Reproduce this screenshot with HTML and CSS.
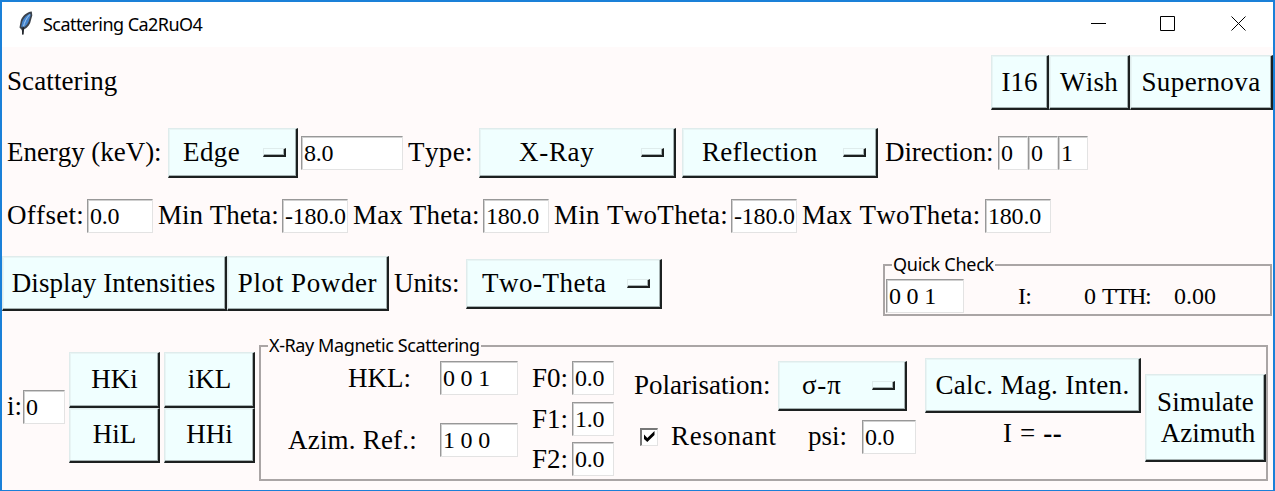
FILE: index.html
```html
<!DOCTYPE html>
<html lang="en">
<head>
<meta charset="utf-8">
<title>Scattering Ca2RuO4</title>
<link rel="stylesheet" href="styles.css">
</head>
<body>
<div class="window">
  <header class="titlebar">
    <svg class="feather" width="16" height="24" viewBox="0 0 16 24">
      <path d="M13.800 .5C8.500 1 4.500 5 2.800 9.500L1.500 16.500L3.800 19L4.400 23.500H5.400L6 18.500C10 16.500 12.300 13 13 9L14.300 4.500Z" fill="#3b424b"/>
      <path d="M12 2.500C8.500 4 5.500 7 4.300 10.500L3.200 15.500L5 17C8.500 15 10.500 12 11.300 8.500L12.600 4.500Z" fill="#4484cc"/>
      <path d="M11.800 3.500C8.500 7 6.500 11 5.300 16" stroke="#a9cdf0" stroke-width="1" fill="none"/>
      <path d="M5.200 15.500L4.800 23.500" stroke="#15181c" stroke-width="1.200" fill="none"/>
    </svg>
    <span class="title">Scattering Ca2RuO4</span>
    <svg class="controls" width="156" height="16" viewBox="0 0 156 16" fill="none" stroke="#000" stroke-width="1">
      <path d="M0 7.500H15M69.500 .5H83.500V14.500H69.500ZM140.500 .5L154.500 14.500M154.500 .5L140.500 14.500"/>
    </svg>
  </header>

  <section class="row row-head">
    <span class="label t-head">Scattering</span>
    <div class="presets">
      <button class="btn"><span class="t-i16">I16</span></button>
      <button class="btn"><span class="t-wish">Wish</span></button>
      <button class="btn"><span class="t-super">Supernova</span></button>
    </div>
  </section>

  <section class="row row-energy">
    <span class="label t-energy">Energy (keV):</span>
    <button class="menu"><span class="t-edge">Edge</span><i class="bar"></i></button>
    <span></span>
    <div class="entry">8.0</div>
    <span class="label t-type">Type:</span>
    <button class="menu"><span class="t-xray">X-Ray</span><i class="bar"></i></button>
    <span></span>
    <button class="menu"><span class="t-refl">Reflection</span><i class="bar"></i></button>
    <span class="label t-dir">Direction:</span>
    <div class="entry">0</div>
    <div class="entry">0</div>
    <div class="entry">1</div>
  </section>

  <section class="row row-range">
    <span class="label t-offset">Offset:</span>
    <div class="entry">0.0</div>
    <span class="label t-mint">Min Theta:</span>
    <div class="entry">-180.0</div>
    <span class="label t-maxt">Max Theta:</span>
    <div class="entry">180.0</div>
    <span class="label t-two-theta">Min TwoTheta:</span>
    <div class="entry">-180.0</div>
    <span class="label t-two-theta">Max TwoTheta:</span>
    <div class="entry">180.0</div>
  </section>

  <section class="row row-display">
    <button class="btn"><span class="t-disp">Display Intensities</span></button>
    <button class="btn"><span class="t-plot">Plot Powder</span></button>
    <span class="label t-units">Units:</span>
    <button class="menu"><span class="t-two">Two-Theta</span><i class="bar"></i></button>
    <span></span>
    <div class="group quick">
      <span class="legend lg-quick">Quick Check</span>
      <div class="entry">0 0 1</div>
      <span class="small t-int">I:</span>
      <span class="small t-zero">0</span>
      <span class="small t-tth">TTH:</span>
      <span class="small">0.00</span>
    </div>
  </section>

  <section class="row row-bottom">
    <span class="label t-i">i:</span>
    <div class="entry index">0</div>
    <div class="planes">
      <button class="btn"><span class="t-plane">HKi</span></button>
      <button class="btn"><span class="t-plane">iKL</span></button>
      <button class="btn"><span class="t-plane">HiL</span></button>
      <button class="btn"><span class="t-plane">HHi</span></button>
    </div>
    <div class="group magnetic">
      <span class="legend lg-mag">X-Ray Magnetic Scattering</span>
      <div class="refs">
        <span class="label t-hkl">HKL:</span><div class="entry">0 0 1</div>
        <span class="label t-azim">Azim. Ref.:</span><div class="entry">1 0 0</div>
      </div>
      <div class="factors">
        <span class="label">F0:</span><div class="entry">0.0</div>
        <span class="label">F1:</span><div class="entry">1.0</div>
        <span class="label">F2:</span><div class="entry">0.0</div>
      </div>
      <div class="polar">
        <div class="polar-top">
          <span class="label t-pol">Polarisation:</span>
          <button class="menu"><span class="t-sp">σ-π</span><i class="bar"></i></button>
        </div>
        <div class="polar-low">
          <span class="check"><svg width="14" height="14" viewBox="0 0 14 14"><path d="M2 4.500V9L5.300 12L12.500 5V1L5.300 8Z" fill="#000"/></svg></span>
          <span class="label t-res">Resonant</span>
          <span class="label t-psi">psi:</span>
          <div class="entry">0.0</div>
        </div>
      </div>
      <div class="calc">
        <button class="btn"><span class="t-calc">Calc. Mag. Inten.</span></button>
        <span class="label t-result">I = <b>--</b></span>
      </div>
      <button class="btn simulate"><span class="t-sim">Simulate</span><span class="t-azm">Azimuth</span></button>
    </div>
  </section>
</div>
</body>
</html>
```
FILE: styles.css
```css
* { box-sizing: border-box; }
body { margin: 0; }

.window {
  width: 1275px;
  height: 491px;
  border: 2px solid #1a80d8;
  border-bottom-width: 1px;
  background: #fffafa;
  color: #000;
  font: 27px/31px "Liberation Serif", serif;
  font-kerning: none;
  font-variant-ligatures: none;
  overflow: hidden;
}

.titlebar {
  display: flex;
  height: 45px;
  background: #fff;
  font: 18px/24px "Noto Sans", sans-serif;
}
.feather { margin: 9px 0 0 16px; }
.title { margin: 10px 0 0 9px; letter-spacing: -.55px; white-space: nowrap; }
.controls { margin: 14px 26px 0 auto; }

.row { display: grid; align-items: center; }
.label, .btn, .menu, .entry, .small { white-space: pre; }
.label { padding: 0 0 2px 5px; }

.btn, .menu {
  margin: 0;
  padding: 0;
  font: inherit;
  color: inherit;
  background: #f0ffff;
  border: 1px solid #dfecec;
  border-right: 2px solid #1c2020;
  border-bottom: 2px solid #1c2020;
  box-shadow: inset -1px -1px #a5b2b2, inset 1px 1px #e8f5f5;
  display: flex;
  align-items: center;
  justify-content: center;
}
.btn { height: 55px; }
.menu { height: 50px; justify-content: space-between; padding: 0 10px 0 13px; }
.bar {
  width: 23px;
  height: 9px;
  border: 1px solid #dfecec;
  border-right: 2px solid #1c2020;
  border-bottom: 2px solid #1c2020;
  box-shadow: inset -1px -1px #a5b2b2;
}
.entry {
  height: 34px;
  padding-left: 2px;
  background: #fff;
  border: 1px solid #e3e3e3;
  border-top-color: #989898;
  border-left-color: #989898;
  box-shadow: inset 1px 1px #d0d0d0;
  font-size: 24px;
  line-height: 33px;
  letter-spacing: -.2px;
  overflow: hidden;
}
.small { font-size: 24px; }

.row-head { display: flex; justify-content: space-between; margin-top: 8px; }
.presets { display: grid; grid-template-columns: 58px 81px 143px; }
.t-head { letter-spacing: .1px; }
.t-wish { letter-spacing: .2px; }
.t-super { letter-spacing: .4px; }

.row-energy {
  margin-top: 18px;
  grid-template-columns: 166px 130px 3px 102px 76px 197px 6px 196px 120px 30px 30px 30px;
}
.t-energy { letter-spacing: -.05px; }
.t-edge { padding-left: 1px; letter-spacing: .4px; }
.t-type { letter-spacing: .4px; }
.t-xray { padding-left: 26px; letter-spacing: .7px; }
.t-refl { padding-left: 6px; letter-spacing: .3px; }
.t-dir { padding-left: 7px; letter-spacing: -.1px; }

.row-range {
  margin-top: 21px;
  grid-template-columns: 85px 66px 129px 66px 135px 66px 182px 66px 188px 66px;
}
.t-offset { letter-spacing: .3px; }
.t-maxt { letter-spacing: .15px; }
.t-two-theta { letter-spacing: .3px; }

.row-display {
  margin-top: 23px;
  align-items: start;
  grid-template-columns: 225px 162px 77px 196px 221px 389px;
}
.t-disp { letter-spacing: .1px; padding-right: 1px; }
.t-plot { letter-spacing: .6px; }
.t-units { margin-top: 12px; letter-spacing: -.1px; }
.t-two { padding-left: 2px; letter-spacing: .5px; }
.row-display > .menu { margin-top: 3px; }

.group {
  position: relative;
  border: 2px solid #aaa5a5;
}
.legend {
  position: absolute;
  font: 18px/22px "Noto Sans", sans-serif;
  background: #fffafa;
  white-space: nowrap;
}
.quick {
  margin-top: 8px;
  height: 52px;
  padding: 12px 0 0 1px;
  display: grid;
  align-items: center;
  grid-template-columns: 78px 78px 54px 78px 60px;
}
.quick .small { line-height: 34px; margin-top: -1px; }
.t-int { padding-left: 54px; letter-spacing: -.8px; }
.t-zero { text-align: right; }
.t-tth { padding-left: 6px; letter-spacing: -1.200px; }
.lg-quick { left: 7px; top: -13px; padding: 0 1px; letter-spacing: -.25px; }

.row-bottom {
  margin-top: 24px;
  align-items: start;
  grid-template-columns: 21px 46px 190px 1009px;
}
.t-i { margin-top: 51px; }
.index { margin: 50px 4px 0 0; }
.planes {
  margin-top: 12px;
  display: grid;
  grid-template-columns: 91px 91px;
  grid-auto-rows: 55.500px;
  column-gap: 4px;
}
.planes .btn { height: auto; }
.t-plane { padding-left: 1px; }
.magnetic {
  margin-top: 5px;
  height: 136px;
  display: flex;
}
.lg-mag { left: 7px; top: -13px; padding: 0 1px; letter-spacing: -.4px; }
.refs {
  margin: 14px 0 0 27px;
  display: grid;
  grid-template-columns: 152px 78px;
  grid-auto-rows: 34px;
  row-gap: 28px;
}
.refs .label, .factors .label { padding: 2px 0 0; }
.refs .t-hkl { padding-left: 60px; }
.t-azim { letter-spacing: .2px; }
.factors {
  margin: 14px 0 0 14px;
  display: grid;
  grid-template-columns: 40px 42px;
  grid-auto-rows: 34px;
  row-gap: 6.500px;
}
.polar { margin: 14px 0 0 20px; }
.polar-top { display: grid; grid-template-columns: 144px 129px; align-items: center; }
.polar-top .label, .polar-low .label { padding: 0 0 2px; }
.polar-top .menu { padding-left: 23px; }
.t-sp { letter-spacing: .8px; }
.polar-low {
  margin-top: 9px;
  display: grid;
  align-items: center;
  grid-template-columns: 37px 137px 54px 54px;
}
.t-res { letter-spacing: .65px; }
.check {
  width: 18px;
  height: 18px;
  margin-left: 6px;
  background: #fff;
  border: 1px solid #e3e3e3;
  border-top: 2px solid #777;
  border-left: 2px solid #777;
  display: flex;
}
.calc {
  margin: 11px 0 0 9px;
  width: 216px;
  display: flex;
  flex-direction: column;
}
.t-calc { letter-spacing: .35px; }
.calc .label { padding: 0; margin: 5px 0 0 78px; letter-spacing: .6px; }
.simulate {
  margin: 27px 0 0 4px;
  width: 121px;
  height: 88px;
  flex-direction: column;
}
.t-sim { padding-left: 1px; letter-spacing: .1px; }
.t-azm { padding-left: 6px; }
```
